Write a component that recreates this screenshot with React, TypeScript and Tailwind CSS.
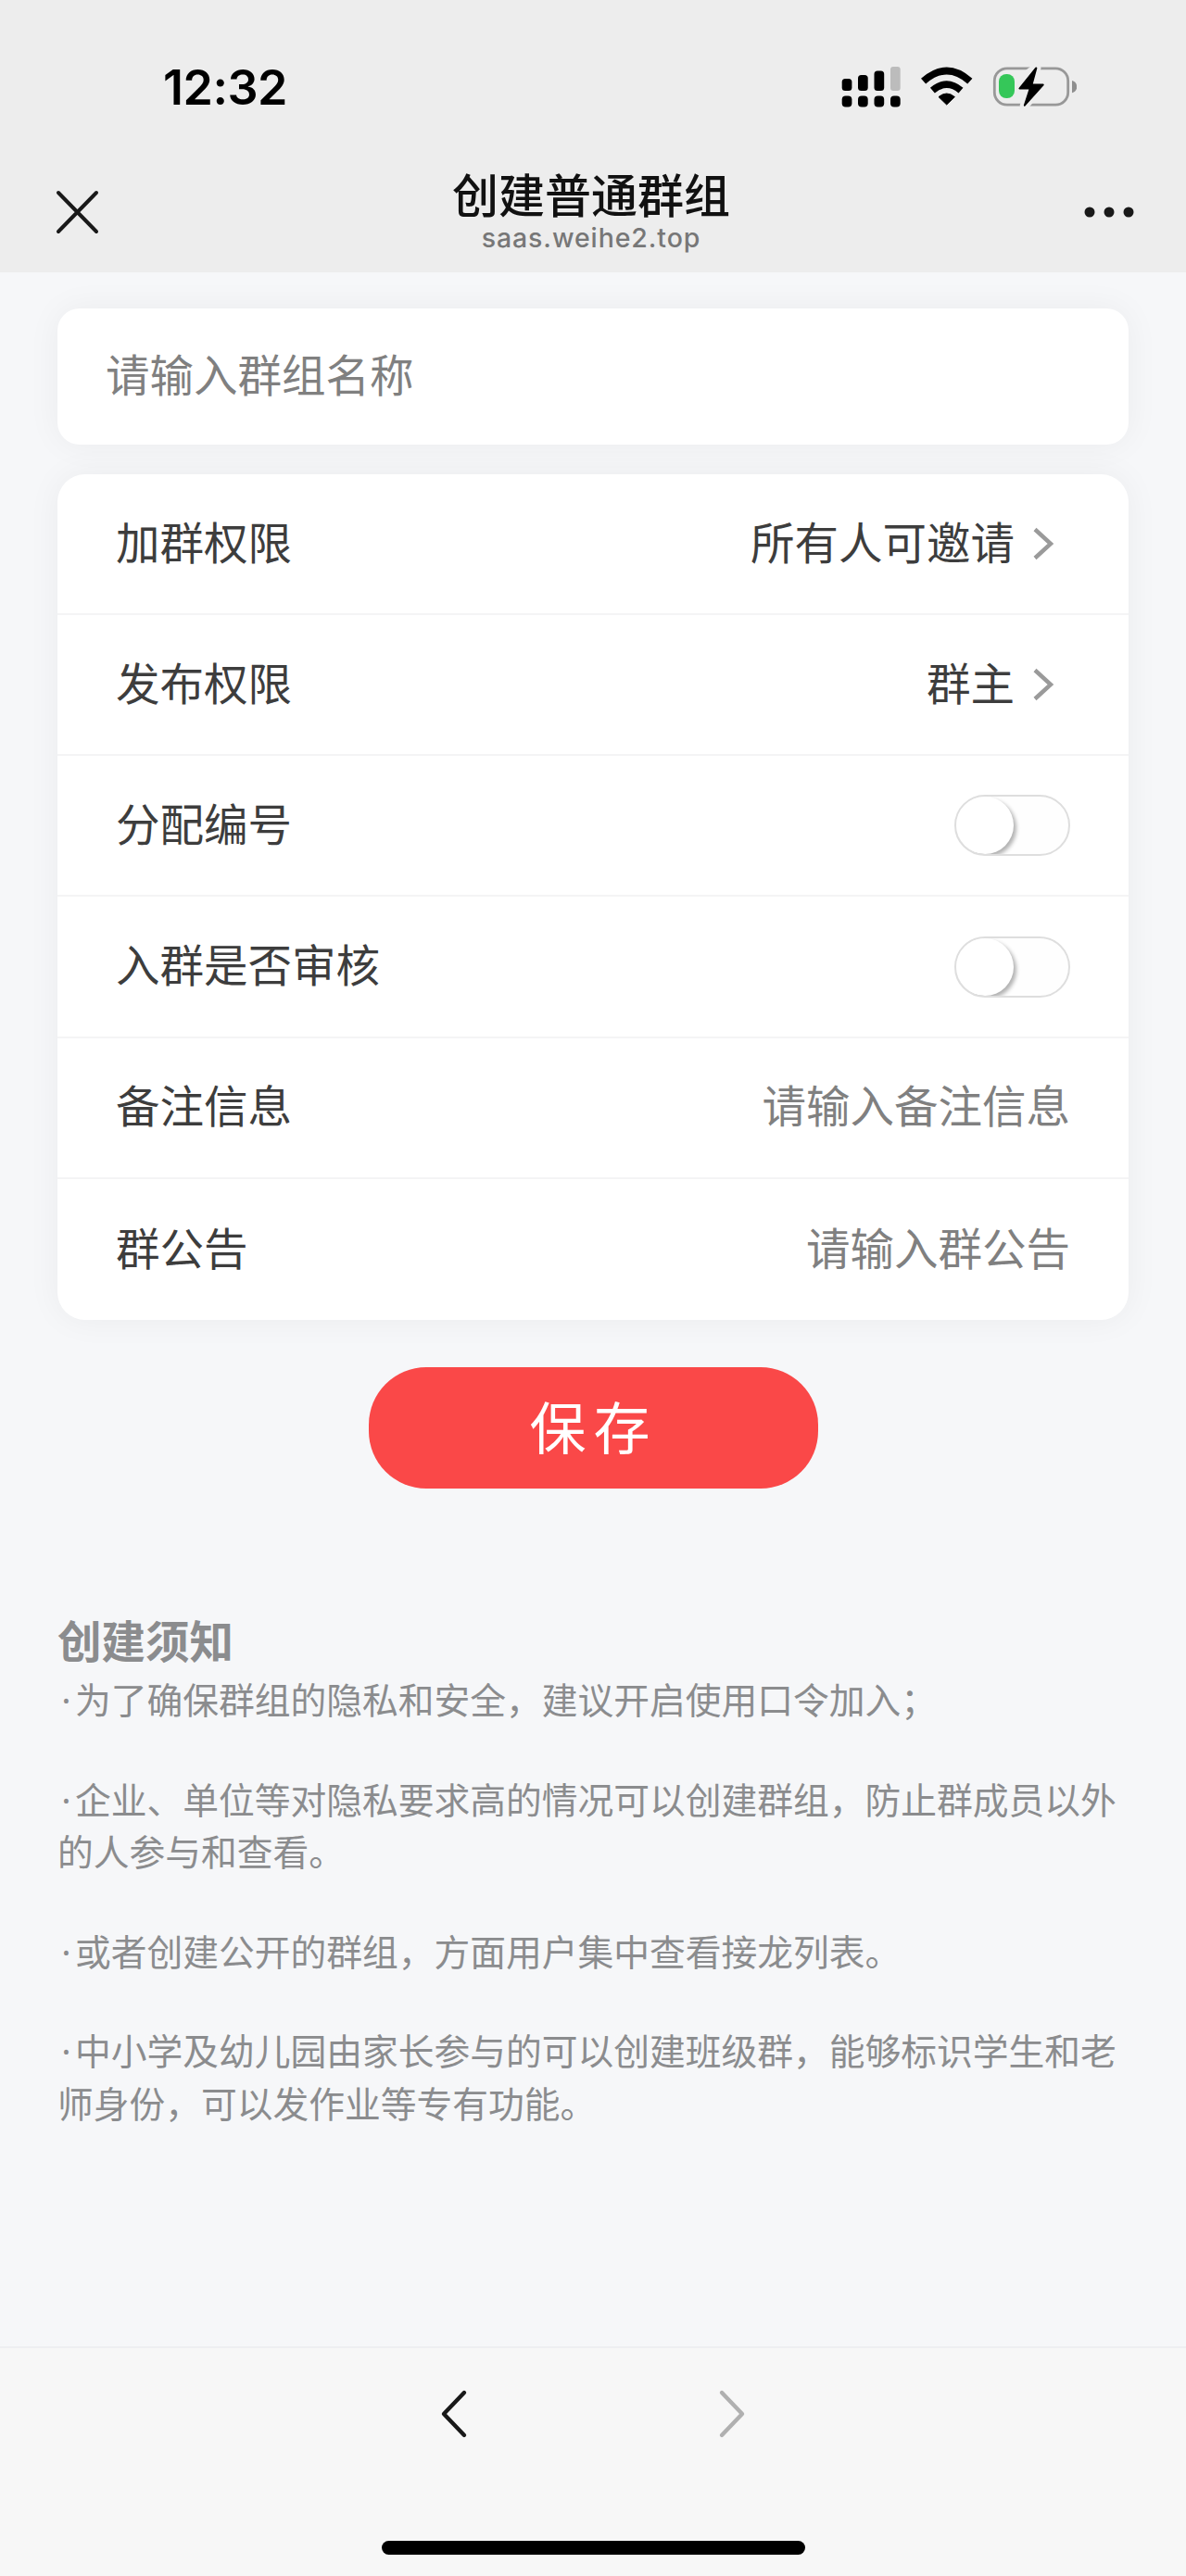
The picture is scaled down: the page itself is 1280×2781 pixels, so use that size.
import type { ReactNode } from "react";

const NOTICES = [
  "为了确保群组的隐私和安全，建议开启使用口令加入；",
  "企业、单位等对隐私要求高的情况可以创建群组，防止群成员以外\n的人参与和查看。",
  "或者创建公开的群组，方面用户集中查看接龙列表。",
  "中小学及幼儿园由家长参与的可以创建班级群，能够标识学生和老\n师身份，可以发作业等专有功能。",
];

export default function App() {
  return (
    <div className="flex h-[2781px] w-[1280px] flex-col overflow-hidden bg-[#f6f7f9] font-['Noto_Sans_CJK_SC',sans-serif]">
      <header className="h-[294px] shrink-0 bg-[#ededed]">
        <StatusBar />
        <NavBar />
      </header>

      <main className="flex flex-1 flex-col px-[62px] pt-[39px]">
        <div className="flex h-[147px] items-center rounded-3xl bg-white pb-2 pl-[52px] shadow-[0_0_36px_rgba(0,0,0,0.05)]">
          <span className="text-[47.5px] leading-none text-[#808080]">请输入群组名称</span>
        </div>

        <div className="mt-8 flex h-[913px] flex-col divide-y-2 divide-[#f4f4f5] rounded-[30px] bg-white shadow-[0_0_36px_rgba(0,0,0,0.05)]">
          <Row label="加群权限">
            <Picker value="所有人可邀请" />
          </Row>
          <Row label="发布权限">
            <Picker value="群主" />
          </Row>
          <Row label="分配编号">
            <Toggle />
          </Row>
          <Row label="入群是否审核">
            <Toggle />
          </Row>
          <Row label="备注信息">
            <Placeholder>请输入备注信息</Placeholder>
          </Row>
          <Row label="群公告">
            <Placeholder>请输入群公告</Placeholder>
          </Row>
        </div>

        <button
          type="button"
          className="ml-[336px] mt-[51px] h-[131px] w-[485px] rounded-[62px] bg-[#fa4848] pb-1.5 text-[61px] leading-none tracking-[8px] text-white"
        >
          保存
        </button>

        <section className="mt-[132px] text-[#8b8c8e]">
          <h2 className="text-[47.5px] font-bold leading-[62px]">创建须知</h2>
          <div className="mt-1 space-y-[51px]">
            {NOTICES.map((text) => (
              <p key={text} className="whitespace-pre text-[38.75px] leading-[56.6px]">
                <span className="inline-block w-[19px] text-center font-['Noto_Sans',sans-serif] leading-none">·</span>
                {text}
              </p>
            ))}
          </div>
        </section>
      </main>

      <footer className="flex h-[248px] shrink-0 flex-col items-center border-t-2 border-[#eeeff1] bg-[#f7f7f7]">
        <div className="mt-[43px] flex w-[332px] justify-between">
          <svg width="32" height="56" viewBox="0 0 32 56" fill="none" stroke="#191919" strokeWidth="4.4" strokeLinecap="round" strokeLinejoin="round">
            <path d="M27 5 5 28l22 23" />
          </svg>
          <svg width="32" height="56" viewBox="0 0 32 56" fill="none" stroke="#b0b0b0" strokeWidth="4.4" strokeLinecap="round" strokeLinejoin="round">
            <path d="m5 5 22 23L5 51" />
          </svg>
        </div>
        <div className="mt-[109px] h-[15px] w-[457px] rounded-full bg-black" />
      </footer>
    </div>
  );
}

function StatusBar() {
  return (
    <div className="flex h-[188px] items-start justify-between pl-[176px] pr-[118px] pt-[64px]">
      <span className="font-['Inter',sans-serif] text-[52px] font-semibold leading-[62px] tracking-[-0.5px] text-black">
        12:32
      </span>
      <svg width="256" height="48" viewBox="906 70 256 48" className="mt-[6px]">
        <rect x="908.7" y="85" width="10.7" height="13" rx="3.5" />
        <rect x="926" y="81" width="10.7" height="17" rx="3.5" />
        <rect x="943.5" y="76.5" width="10.7" height="21.5" rx="3.5" />
        <rect x="961" y="72" width="10.7" height="26" rx="3" fill="#bcbcbc" />
        <rect x="908.7" y="103.5" width="10.7" height="12" rx="4" />
        <rect x="926" y="103.5" width="10.7" height="12" rx="4" />
        <rect x="943.5" y="103.5" width="10.7" height="12" rx="4" />
        <rect x="961" y="103.5" width="10.7" height="12" rx="4" />
        {/* wifi */}
        <path d="M1021.7 113 1013 104.6Q1021.7 97.4 1030.4 104.6Z" stroke="#000" strokeWidth="1" strokeLinejoin="round" />
        <path d="M1006.4 97.6Q1021.7 84.6 1037 97.6" fill="none" stroke="#000" strokeWidth="7.6" />
        <path d="M996.6 87.6Q1021.7 65.4 1046.8 87.6" fill="none" stroke="#000" strokeWidth="7.8" />
        {/* battery */}
        <rect x="1073.3" y="73.8" width="79.4" height="39.4" rx="13.5" fill="none" stroke="#989898" strokeWidth="2.8" />
        <path d="M1157 87q5.2 1.6 5.2 6.6t-5.2 6.6z" fill="#8e8e8e" />
        <path
          d="M1117.5 72.8 1099.6 95q-.8 1.4.8 1.4h10l-5.6 17.4q.4 1.6 1.8.4L1126.6 92q.6-1.6-.8-1.6h-11l4.6-17q-.6-1.6-1.9-.6z"
          stroke="#ededed"
          strokeWidth="8"
        />
        <rect x="1078" y="80" width="17" height="26" rx="8" fill="#35c759" />
        <path d="M1117.5 72.8 1099.6 95q-.8 1.4.8 1.4h10l-5.6 17.4q.4 1.6 1.8.4L1126.6 92q.6-1.6-.8-1.6h-11l4.6-17q-.6-1.6-1.9-.6z" />
      </svg>
    </div>
  );
}

function NavBar() {
  return (
    <div className="flex items-start justify-between pl-[58px] pr-[54px]">
      <svg width="52" height="52" viewBox="0 0 52 52" className="mt-[15px]" stroke="#191919" strokeWidth="4" strokeLinecap="round">
        <path d="m5 5 41 42M46 5 5 47" />
      </svg>
      <div className="flex flex-col items-center pr-1">
        <h1 className="-mt-[9px] text-[50px] font-medium leading-[58px] text-[#111]">创建普通群组</h1>
        <span className="mt-[3px] font-['Inter',sans-serif] text-[28.5px] font-medium leading-[34px] tracking-[0.9px] text-[#777]">
          saas.weihe2.top
        </span>
      </div>
      <svg width="56" height="14" viewBox="0 0 56 14" className="mt-[34px]" fill="#191919">
        <circle cx="6" cy="7" r="5.5" />
        <circle cx="27" cy="7" r="5.5" />
        <circle cx="48" cy="7" r="5.5" />
      </svg>
    </div>
  );
}

function Row({ label, children }: { label: string; children: ReactNode }) {
  return (
    <div className="flex h-[152.17px] items-center justify-between px-[63px]">
      <span className="pb-[7px] text-[47.5px] leading-none text-[#3d3d3d]">{label}</span>
      {children}
    </div>
  );
}

function Picker({ value }: { value: string }) {
  return (
    <div className="flex items-center pr-[16px]">
      <span className="pb-[7px] text-[47.5px] leading-none text-[#3d3d3d]">{value}</span>
      <svg width="26" height="40" viewBox="0 0 26 40" className="ml-[18px]" fill="none" stroke="#9a9a9a" strokeWidth="4.4">
        <path d="m4 4.5 17 15.5L4 35.5" />
      </svg>
    </div>
  );
}

function Placeholder({ children }: { children: ReactNode }) {
  return <span className="pb-[7px] text-[47.5px] leading-none text-[#808080]">{children}</span>;
}

function Toggle() {
  return (
    <div className="flex h-[66px] w-[125px] overflow-hidden rounded-full border-2 border-[#dedede] bg-[#fefefe]">
      <div className="size-[62px] rounded-full bg-white shadow-[3px_3px_4px_rgba(0,0,0,0.3)]" />
    </div>
  );
}
